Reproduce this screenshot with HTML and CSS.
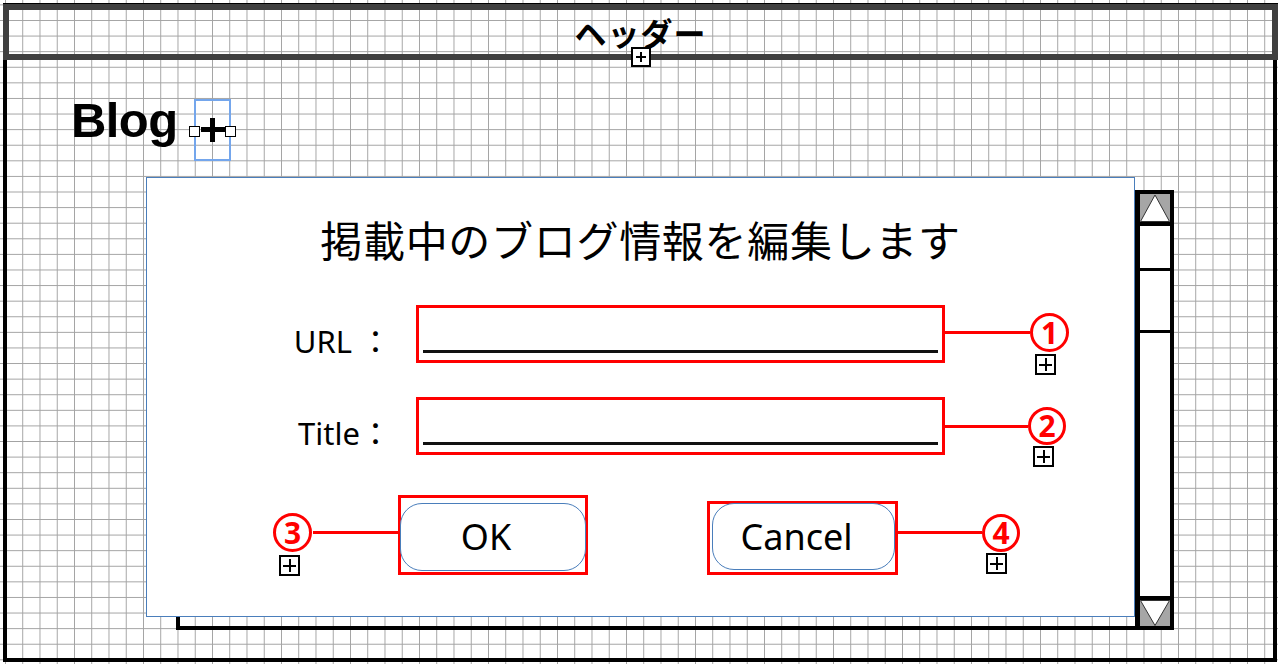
FILE: index.html
```html
<!DOCTYPE html>
<html lang="ja">
<head>
<meta charset="utf-8">
<title>Blog 編集</title>
<link rel="stylesheet" href="styles.css">
</head>
<body>
<header class="header">
  <span class="header-title">ヘッダー</span>
  <span class="plus-box header-plus">
    <svg width="20" height="20" viewBox="0 0 20 20" shape-rendering="crispEdges"><rect x="1" y="1" width="18" height="18" fill="#fff" stroke="#000" stroke-width="2"/><rect x="5" y="9" width="10" height="2" fill="#000"/><rect x="9" y="5" width="2" height="10" fill="#000"/></svg>
  </span>
</header>
<main class="main">
  <div class="blog-row">
    <h1 class="blog-title">Blog</h1>
    <div class="add-widget">
      <svg width="24" height="24" viewBox="0 0 24 24" shape-rendering="crispEdges"><rect x="0" y="9" width="24" height="5" fill="#000"/><rect x="9" y="0" width="5" height="24" fill="#000"/></svg>
      <span class="handle handle-l"></span>
      <span class="handle handle-r"></span>
    </div>
  </div>

  <div class="scroll-frame">
    <div class="scroll-content"></div>
    <div class="scrollbar">
      <div class="sb-arrow sb-up">
        <svg width="30" height="28" viewBox="0 0 30 28"><polygon points="15,1 0.5,27.5 29.5,27.5" fill="#fff" stroke="#333" stroke-width="1"/></svg>
      </div>
      <div class="sb-sep"></div>
      <div class="sb-track"><div class="sb-thumb"></div></div>
      <div class="sb-sep"></div>
      <div class="sb-arrow sb-down">
        <svg width="30" height="26" viewBox="0 0 30 26"><polygon points="0.5,0.5 29.5,0.5 15,25.5" fill="#fff" stroke="#333" stroke-width="1"/></svg>
      </div>
    </div>
  </div>

  <section class="dialog">
    <h2 class="dialog-title">掲載中のブログ情報を編集します</h2>
    <div class="form">
      <div class="row">
        <label class="label">URL ：</label>
        <div class="field"><span class="underline"></span></div>
      </div>
      <div class="row">
        <label class="label">Title：</label>
        <div class="field"><span class="underline"></span></div>
      </div>
    </div>
    <div class="buttons">
      <div class="hl hl-ok"><button class="btn btn-ok">OK</button></div>
      <div class="hl hl-cancel"><button class="btn btn-cancel">Cancel</button></div>
    </div>

    <span class="c-line c1-line"></span>
    <span class="c-circle c1-circle">1</span>
    <span class="plus-box c1-plus"><svg width="21" height="21" viewBox="0 0 21 21" shape-rendering="crispEdges"><rect x="1" y="1" width="19" height="19" fill="#fff" stroke="#000" stroke-width="2"/><rect x="4" y="10" width="13" height="2" fill="#000"/><rect x="10" y="4" width="2" height="13" fill="#000"/></svg></span>

    <span class="c-line c2-line"></span>
    <span class="c-circle c2-circle">2</span>
    <span class="plus-box c2-plus"><svg width="21" height="21" viewBox="0 0 21 21" shape-rendering="crispEdges"><rect x="1" y="1" width="19" height="19" fill="#fff" stroke="#000" stroke-width="2"/><rect x="4" y="10" width="13" height="2" fill="#000"/><rect x="10" y="4" width="2" height="13" fill="#000"/></svg></span>

    <span class="c-line c3-line"></span>
    <span class="c-circle c3-circle">3</span>
    <span class="plus-box c3-plus"><svg width="21" height="21" viewBox="0 0 21 21" shape-rendering="crispEdges"><rect x="1" y="1" width="19" height="19" fill="#fff" stroke="#000" stroke-width="2"/><rect x="4" y="10" width="13" height="2" fill="#000"/><rect x="10" y="4" width="2" height="13" fill="#000"/></svg></span>

    <span class="c-line c4-line"></span>
    <span class="c-circle c4-circle">4</span>
    <span class="plus-box c4-plus"><svg width="21" height="21" viewBox="0 0 21 21" shape-rendering="crispEdges"><rect x="1" y="1" width="19" height="19" fill="#fff" stroke="#000" stroke-width="2"/><rect x="4" y="10" width="13" height="2" fill="#000"/><rect x="10" y="4" width="2" height="13" fill="#000"/></svg></span>
  </section>
</main>
</body>
</html>
```

FILE: styles.css
```css
html {
  background-color: #fff;
  background-image:
    linear-gradient(to right, #a3a3a3 1px, transparent 1px),
    linear-gradient(to bottom, #a3a3a3 1px, transparent 1px);
  background-size: 17.25px 15.6px;
  background-position: 5px 4.4px;
}

body {
  margin: 0;
  font-family: "Noto Sans", "Noto Sans CJK JP", sans-serif;
  color: #000;
}

/* header */
.header {
  position: relative;
  box-sizing: border-box;
  margin: 4px 0 0 3px;
  width: 1275px;
  height: 56px;
  border: 6px solid #404040;
  box-shadow: 0 -1px 0 #000;
  display: flex;
  align-items: center;
  justify-content: center;
}

.header-title {
  font-family: "Noto Sans CJK JP", sans-serif;
  font-weight: 700;
  font-size: 32px;
  line-height: 1;
  letter-spacing: 1px;
}

.plus-box {
  display: block;
  line-height: 0;
}

.plus-box svg {
  display: block;
}

.header-plus {
  position: absolute;
  left: 50%;
  bottom: -13px;
  transform: translateX(-50%);
  z-index: 2;
}

/* main frame */
.main {
  position: relative;
  box-sizing: border-box;
  margin-left: 3px;
  width: 1274px;
  height: 602px;
  padding-top: 32px;
  border: 4px solid #000;
  border-top: 0;
}

.blog-row {
  display: flex;
  align-items: flex-start;
  padding-left: 64px;
}

.blog-title {
  margin: 0;
  font-family: "Liberation Sans", Arial, sans-serif;
  font-weight: 700;
  font-size: 49px;
  line-height: 56px;
  letter-spacing: -0.6px;
}

.add-widget {
  position: relative;
  box-sizing: border-box;
  width: 37px;
  height: 62px;
  margin: 7px 0 0 17px;
  padding-top: 17px;
  border: 2px solid #74a6ec;
  display: flex;
  justify-content: center;
}

.add-widget svg {
  display: block;
}

.handle {
  position: absolute;
  top: 25px;
  box-sizing: border-box;
  width: 11px;
  height: 11px;
  background: #fff;
  border: 1px solid #000;
}

.handle-l { left: -7px; }
.handle-r { left: 29px; }

/* scroll frame behind dialog */
.scroll-frame {
  box-sizing: border-box;
  margin: 29px 0 0 169px;
  width: 998px;
  height: 440px;
  border: 4px solid #000;
  display: flex;
}

.scroll-content {
  flex: 1;
}

.scrollbar {
  box-sizing: border-box;
  width: 35px;
  border-left: 5px solid #000;
  display: flex;
  flex-direction: column;
  background: #fff;
}

.sb-arrow {
  background: #a6a6a6;
}

.sb-arrow svg {
  display: block;
}

.sb-up { height: 28px; }
.sb-down { height: 26px; }

.sb-sep {
  height: 4px;
  background: #000;
}

.sb-track {
  flex: 1;
  padding-top: 42px;
}

.sb-thumb {
  height: 59px;
  border-top: 3px solid #000;
  border-bottom: 3px solid #000;
}

/* dialog */
.dialog {
  position: absolute;
  left: 139px;
  top: 117px;
  box-sizing: border-box;
  width: 989px;
  height: 440px;
  border: 1px solid #4a7ebb;
  background: #fff;
  z-index: 1;
}

.dialog-title {
  margin: 0;
  padding-top: 36px;
  text-align: center;
  font-family: "Noto Sans CJK JP", sans-serif;
  font-weight: 400;
  font-size: 42px;
  line-height: 50px;
  letter-spacing: 0.7px;
}

.form {
  margin-top: 41px;
  padding-left: 103px;
  display: flex;
  flex-direction: column;
  gap: 34px;
}

.row {
  display: flex;
  align-items: flex-start;
  height: 58px;
}

.label {
  box-sizing: border-box;
  width: 141px;
  height: 58px;
  padding-top: 14px;
  margin-right: 25px;
  text-align: right;
  font-size: 31px;
  line-height: 44px;
  white-space: pre;
}

.field {
  box-sizing: border-box;
  width: 529px;
  height: 58px;
  border: 3px solid #f00;
  display: flex;
  align-items: flex-end;
  padding: 0 4px 7px;
}

.underline {
  flex: 1;
  height: 3px;
  background: #111;
}

.buttons {
  display: flex;
  align-items: flex-end;
  margin-top: 40px;
  padding-left: 251px;
  gap: 119px;
}

.hl {
  box-sizing: border-box;
  border: 3px solid #f00;
}

.hl-ok {
  width: 190px;
  height: 80px;
  padding-top: 5px;
}

.hl-cancel {
  width: 191px;
  height: 74px;
  padding-left: 2px;
}

.btn {
  display: flex;
  align-items: center;
  justify-content: center;
  box-sizing: border-box;
  border: 1px solid #4a7ebb;
  border-radius: 22px;
  background: #fff;
  font-family: "Noto Sans", sans-serif;
  font-size: 36px;
  line-height: 1;
  color: #000;
  padding: 0 14px 0 0;
}

.btn-ok {
  width: 186px;
  height: 68px;
  margin-left: -1px;
}

.btn-cancel {
  width: 183px;
  height: 67px;
  margin-top: -1px;
}

/* callouts */
.c-line,
.c-circle,
.dialog .plus-box {
  position: absolute;
}

.c-line {
  height: 3px;
  background: #f00;
}

.c-circle {
  box-sizing: border-box;
  width: 39px;
  height: 39px;
  border: 3px solid #f00;
  border-radius: 50%;
  background: #fff;
  color: #f00;
  font-family: "Noto Sans", sans-serif;
  font-weight: 700;
  font-size: 30px;
  line-height: 1;
  display: flex;
  align-items: center;
  justify-content: center;
}

.c1-line { left: 798px; top: 153px; width: 85px; }
.c1-circle { left: 883px; top: 135px; }
.c1-plus { left: 888px; top: 176px; }

.c2-line { left: 798px; top: 247px; width: 83px; }
.c2-circle { left: 881px; top: 229px; width: 38px; height: 38px; }
.c2-plus { left: 886px; top: 268px; }

.c3-line { left: 166px; top: 353px; width: 85px; }
.c3-circle { left: 126px; top: 335px; }
.c3-plus { left: 132px; top: 377px; }

.c4-line { left: 751px; top: 353px; width: 84px; }
.c4-circle { left: 835px; top: 336px; width: 38px; height: 38px; }
.c4-plus { left: 839px; top: 375px; }
```
